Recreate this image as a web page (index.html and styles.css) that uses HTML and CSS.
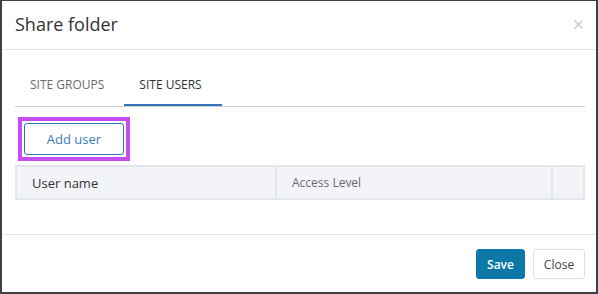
FILE: index.html
```html
<!DOCTYPE html>
<html lang="en">
<head>
    <meta charset="UTF-8">
    <meta name="viewport" content="width=device-width, initial-scale=1.0">
    <title>Share folder</title>
    <link rel="stylesheet" href="styles.css">
</head>
<body>
    <div class="modal">
        <header class="modal-header">
            <h1>Share folder</h1>
            <button class="close-x" aria-label="Close">
                <svg width="9" height="9" viewBox="0 0 9 9"><path d="M0.5 0.5L8.5 8.5M8.5 0.5L0.5 8.5" stroke="#c8c8c8" stroke-width="1.3"/></svg>
            </button>
        </header>
        <div class="modal-body">
            <ul class="tabs">
                <li><a href="#">SITE GROUPS</a></li>
                <li class="active"><a href="#">SITE USERS</a></li>
            </ul>
            <div class="tab-content">
                <span class="focus-ring"><button class="btn-add">Add user</button></span>
                <div class="grid-head">
                    <div class="col col-name">User name</div>
                    <div class="col col-level">Access Level</div>
                    <div class="col col-extra"></div>
                </div>
            </div>
        </div>
        <footer class="modal-footer">
            <button class="btn btn-save">Save</button>
            <button class="btn btn-close">Close</button>
        </footer>
    </div>
</body>
</html>
```

FILE: styles.css
```css
body {
    margin: 0;
    padding: 0;
    background-color: #ffffff;
    font-family: "Open Sans", Arial, sans-serif;
    color: #333333;
}
.modal {
    width: 598px;
    height: 294px;
    box-sizing: border-box;
    border-style: solid;
    border-color: #404040;
    border-width: 1px 2px 2px 2px;
    background-color: #ffffff;
    display: flex;
    flex-direction: column;
}
.modal-header {
    height: 48px;
    border-bottom: 1px solid #e5e5e5;
    display: flex;
    align-items: center;
    justify-content: space-between;
    padding: 0 13px 0 13px;
}
.modal-header h1 {
    margin: 0;
    font-size: 18px;
    font-weight: normal;
    color: #333333;
    margin-top: -3px;
}
.close-x {
    border: none;
    background: none;
    padding: 0;
    display: flex;
    margin-top: -2px;
}
.modal-body {
    padding: 15px 11px 0 13px;
    height: 169px;
    border-bottom: 1px solid #e5e5e5;
}
.tabs {
    list-style: none;
    margin: 0;
    padding: 0;
    display: flex;
    border-bottom: 1px solid #c9d2da;
    height: 41px;
}
.tabs a {
    display: block;
    padding: 0 20px 0 15px;
    height: 40px;
    line-height: 39px;
    font-size: 12px;
    color: #6b6b6b;
    text-decoration: none;
}
.tabs .active a {
    color: #333333;
    border-bottom: 2px solid #3377ba;
    height: 39px;
}
.tab-content {
    padding-top: 10px;
}
/* highlight box drawn round the focused button */
.focus-ring {
    display: inline-flex;
    margin-left: 3px;
    padding: 2px;
    border: 4px solid #c54cf6;
}
.btn-add {
    width: 100px;
    height: 32px;
    border: 1px solid #2f74b5;
    border-radius: 3px;
    background-color: #ffffff;
    color: #3a7cc0;
    font-family: "Open Sans", Arial, sans-serif;
    font-size: 13px;
    cursor: pointer;
}
.grid-head {
    margin-top: 4px;
    display: flex;
    height: 31px;
    border: 2px solid #e3e6ea;
    background-color: #f2f4f8;
    font-size: 13px;
}
.col {
    display: flex;
    align-items: center;
}
.col-name {
    width: 260px;
    padding-left: 15px;
    box-sizing: border-box;
    border-right: 2px solid #e3e6ea;
    color: #333333;
}
.col-level {
    width: 276px;
    padding-left: 15px;
    box-sizing: border-box;
    border-right: 2px solid #e3e6ea;
    color: #6b6b6b;
    font-size: 12px;
}
.col-extra {
    flex: 1;
}
.modal-footer {
    display: flex;
    justify-content: flex-end;
    gap: 8px;
    padding: 14px 11px 0 0;
}
.btn {
    height: 30px;
    border-radius: 3px;
    font-family: "Open Sans", Arial, sans-serif;
    font-size: 12px;
    cursor: pointer;
}
.btn-save {
    width: 49px;
    background-color: #0b78a8;
    color: #ffffff;
    border: 1px solid #0b78a8;
    font-weight: 600;
}
.btn-close {
    width: 52px;
    background-color: #ffffff;
    color: #444444;
    border: 1px solid #dcdfe3;
}
```
